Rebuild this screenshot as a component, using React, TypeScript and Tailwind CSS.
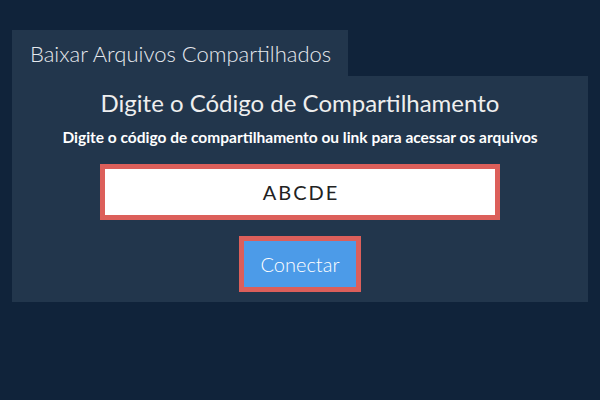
import React from "react";

export default function App() {
  return (
    <div className="w-[600px] h-[400px] bg-[#10233a] pt-[30px] px-[12px]" style={{ fontFamily: "Lato, 'Noto Sans', sans-serif" }}>
      <div className="w-[336px] h-[46px] bg-[#22364c] flex items-center pl-[18px] text-[22px] text-[#e6e9ee] font-light">
        Baixar Arquivos Compartilhados
      </div>
      <div className="w-[576px] bg-[#22364c] flex flex-col items-center pt-[12px] pb-[10px]">
        <div className="text-[24px] leading-[30px] text-[#eeeeee] font-normal">Digite o Código de Compartilhamento</div>
        <div className="text-[15.5px] leading-[20px] text-[#ffffff] font-bold mt-[9px]">
          Digite o código de compartilhamento ou link para acessar os arquivos
        </div>
        <div className="mt-[17px] shrink-0 w-[400px] h-[56px] border-[5px] border-[#dc5f5a] bg-white flex items-center justify-center text-[20px] tracking-[2px] pl-[2px] text-[#222222] font-normal">
          ABCDE
        </div>
        <button className="mt-[16px] shrink-0 w-[122px] h-[56px] border-[5px] border-[#dc5f5a] bg-[#4c9be8] text-white text-[20px] font-light flex items-center justify-center">
          Conectar
        </button>
      </div>
    </div>
  );
}
